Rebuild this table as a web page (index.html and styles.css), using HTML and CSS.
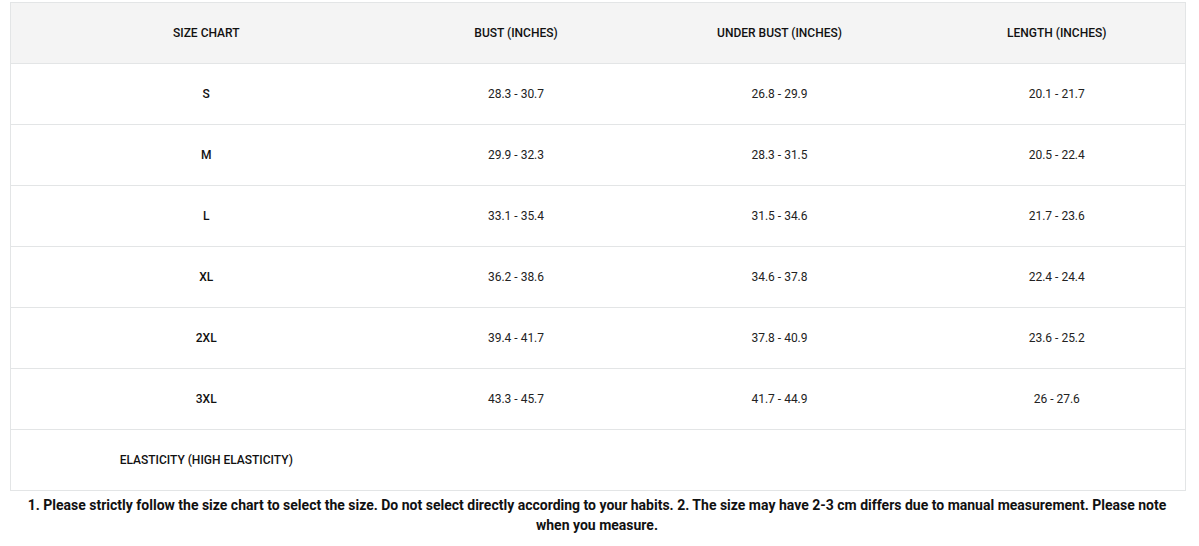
FILE: index.html
```html
<!DOCTYPE html>
<html>
<head>
<meta charset="utf-8">
<link rel="stylesheet" href="styles.css">
</head>
<body>
<div class="wrap">
<table class="chart">
<colgroup>
<col class="c1"><col class="c2"><col class="c3"><col class="c4">
</colgroup>
<thead>
<tr><th>SIZE CHART</th><th>BUST (INCHES)</th><th>UNDER BUST (INCHES)</th><th>LENGTH (INCHES)</th></tr>
</thead>
<tbody>
<tr><td class="sz">S</td><td>28.3 - 30.7</td><td>26.8 - 29.9</td><td>20.1 - 21.7</td></tr>
<tr><td class="sz">M</td><td>29.9 - 32.3</td><td>28.3 - 31.5</td><td>20.5 - 22.4</td></tr>
<tr><td class="sz">L</td><td>33.1 - 35.4</td><td>31.5 - 34.6</td><td>21.7 - 23.6</td></tr>
<tr><td class="sz">XL</td><td>36.2 - 38.6</td><td>34.6 - 37.8</td><td>22.4 - 24.4</td></tr>
<tr><td class="sz">2XL</td><td>39.4 - 41.7</td><td>37.8 - 40.9</td><td>23.6 - 25.2</td></tr>
<tr><td class="sz">3XL</td><td>43.3 - 45.7</td><td>41.7 - 44.9</td><td>26 - 27.6</td></tr>
<tr><td class="sz">ELASTICITY (HIGH ELASTICITY)</td><td></td><td></td><td></td></tr>
</tbody>
</table>
<p class="note">1. Please strictly follow the size chart to select the size. Do not select directly according to your habits. 2. The size may have 2-3 cm differs due to manual measurement. Please note when you measure.</p>
</div>
</body>
</html>
```
FILE: styles.css
```css
html, body { margin: 0; padding: 0; background: #fff; }
body { font-family: Roboto, "Liberation Sans", sans-serif; color: #111; }
.wrap { padding: 2px 13px 0 10px; }
.chart {
  width: 1176px;
  border-collapse: collapse;
  table-layout: fixed;
  border: 1px solid #e3e5e6;
}
.c1 { width: 391px; }
.c2 { width: 229px; }
.c3 { width: 298px; }
.c4 { width: 257px; }
.chart th, .chart td {
  height: 60px;
  padding: 0;
  text-align: center;
  vertical-align: middle;
  font-size: 12px;
  border-top: 1px solid #e3e5e6;
  border-bottom: 1px solid #e3e5e6;
}
.chart th {
  background: #f4f4f4;
  font-weight: 500;
  color: #111;
}
.chart td { font-weight: 400; color: #222; }
.chart td.sz { font-weight: 500; color: #111; }
.note {
  margin: 4px 0 0;
  text-align: center;
  font-size: 14px;
  line-height: 20px;
  font-weight: 700;
  color: #111;
  padding: 0 8px 0 6px;
}
```
